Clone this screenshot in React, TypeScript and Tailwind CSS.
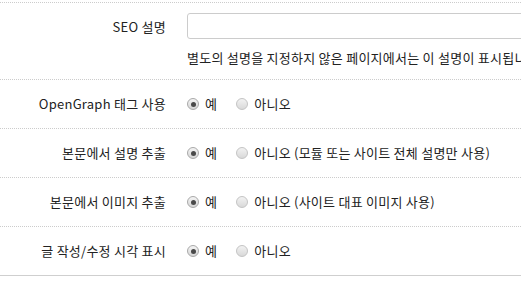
import React from "react"

const font = { fontFamily: '"Malgun Gothic", "Noto Sans CJK KR", "Noto Sans", sans-serif' }

function Radio({ checked, label }: { checked?: boolean; label: string }) {
  return (
    <label className="flex items-center gap-[6px] mr-[19px] whitespace-nowrap">
      <span
        className={
          checked
            ? "flex h-[12px] w-[12px] items-center justify-center rounded-full border border-[#a9a9a9] bg-gradient-to-b from-[#f4f4f4] to-[#d6d6d6]"
            : "flex h-[12px] w-[12px] items-center justify-center rounded-full border border-[#c4c4c4] bg-gradient-to-b from-[#f2f2f2] to-[#d9d9d9]"
        }
      >
        {checked && <span className="h-[5px] w-[5px] rounded-full bg-[#4a4a4a]" />}
      </span>
      <span>{label}</span>
    </label>
  )
}

function Row({ label, children, last }: { label: string; children: React.ReactNode; last?: boolean }) {
  return (
    <div
      className={
        last
          ? "flex h-[49px] items-center border-b border-solid border-[#cfcfcf]"
          : "flex h-[49px] items-center border-b border-dotted border-[#cccccc]"
      }
    >
      <div className="w-[166px] shrink-0 text-right">{label}</div>
      <div className="ml-[21px] flex items-center">{children}</div>
    </div>
  )
}

export default function App() {
  return (
    <div
      className="h-[291px] w-[521px] overflow-hidden bg-white pt-[2px] text-[13px] tracking-[0.25px] text-[#222]"
      style={font}
    >
      <div className="border-t border-dotted border-[#cccccc]">
        {/* SEO description */}
        <div className="flex h-[77px] border-b border-dotted border-[#cccccc]">
          <div className="w-[166px] shrink-0 pt-[14px] text-right">SEO 설명</div>
          <div className="ml-[21px] flex-1 overflow-hidden pt-[10px]">
            <input
              type="text"
              className="block h-[26px] w-[400px] rounded-[3px] border border-[#cccccc] bg-white"
            />
            <p className="mt-[9px] whitespace-nowrap">
              별도의 설명을 지정하지 않은 페이지에서는 이 설명이 표시됩니다.
            </p>
          </div>
        </div>

        <Row label="OpenGraph 태그 사용">
          <Radio checked label="예" />
          <Radio label="아니오" />
        </Row>
        <Row label="본문에서 설명 추출">
          <Radio checked label="예" />
          <Radio label="아니오 (모듈 또는 사이트 전체 설명만 사용)" />
        </Row>
        <Row label="본문에서 이미지 추출">
          <Radio checked label="예" />
          <Radio label="아니오 (사이트 대표 이미지 사용)" />
        </Row>
        <Row label="글 작성/수정 시각 표시" last>
          <Radio checked label="예" />
          <Radio label="아니오" />
        </Row>
      </div>
    </div>
  )
}
